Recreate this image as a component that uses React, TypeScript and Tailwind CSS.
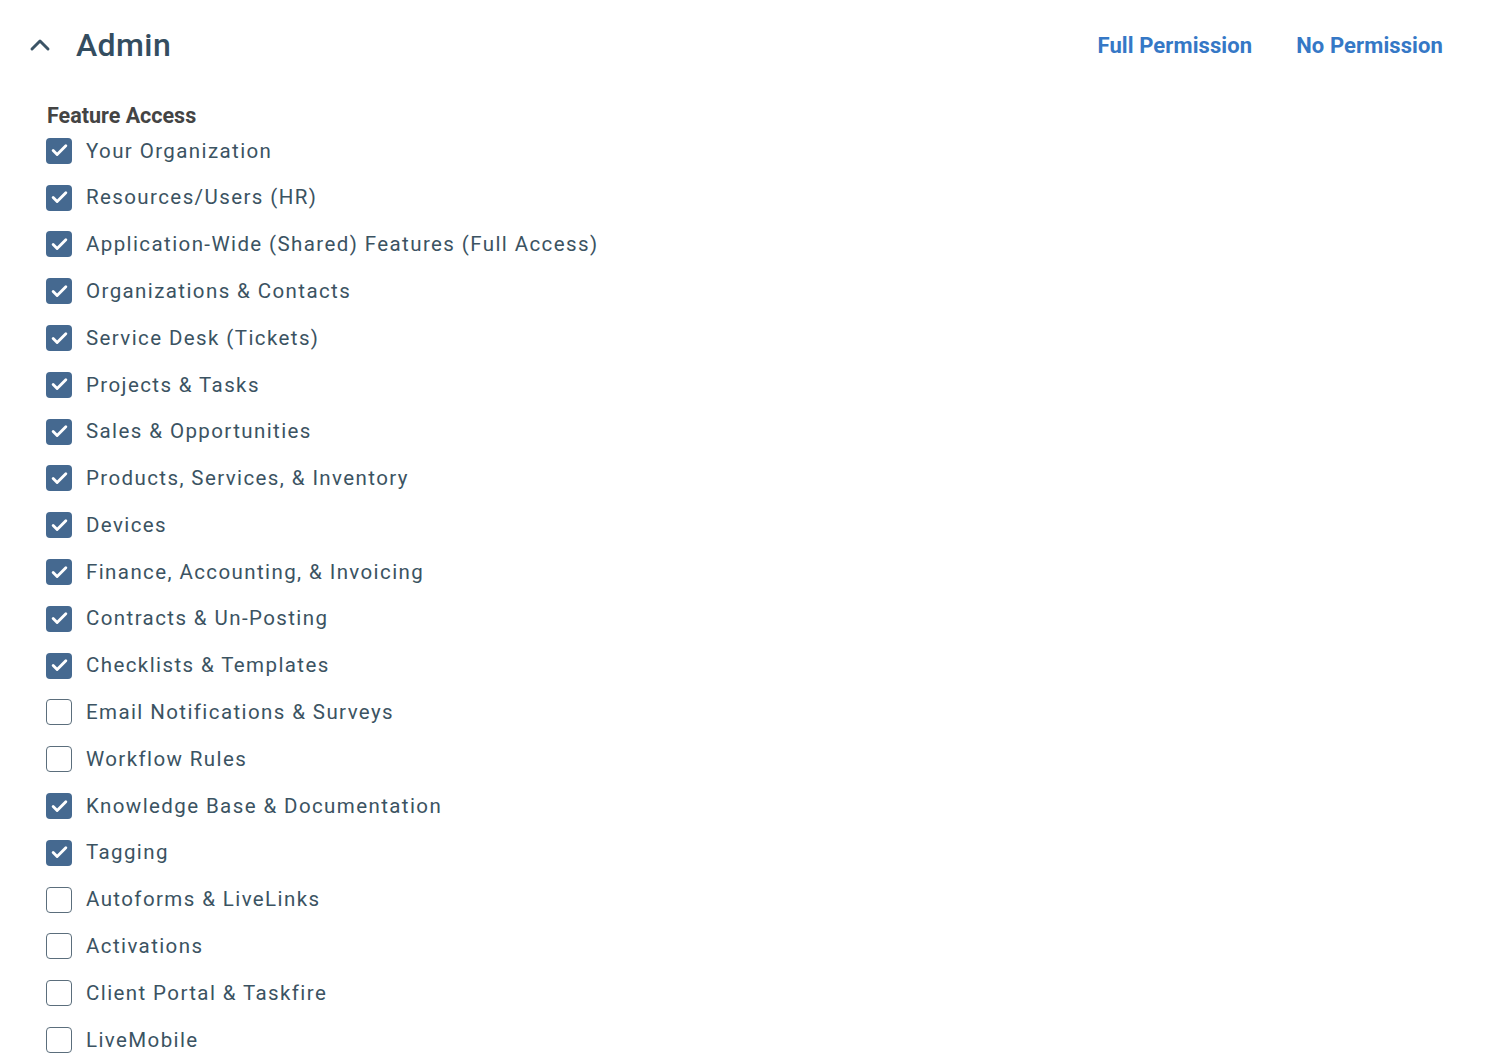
import { ChevronUp, Check } from "lucide-react"

const FEATURES: { label: string; checked: boolean }[] = [
  { label: "Your Organization", checked: true },
  { label: "Resources/Users (HR)", checked: true },
  { label: "Application-Wide (Shared) Features (Full Access)", checked: true },
  { label: "Organizations & Contacts", checked: true },
  { label: "Service Desk (Tickets)", checked: true },
  { label: "Projects & Tasks", checked: true },
  { label: "Sales & Opportunities", checked: true },
  { label: "Products, Services, & Inventory", checked: true },
  { label: "Devices", checked: true },
  { label: "Finance, Accounting, & Invoicing", checked: true },
  { label: "Contracts & Un-Posting", checked: true },
  { label: "Checklists & Templates", checked: true },
  { label: "Email Notifications & Surveys", checked: false },
  { label: "Workflow Rules", checked: false },
  { label: "Knowledge Base & Documentation", checked: true },
  { label: "Tagging", checked: true },
  { label: "Autoforms & LiveLinks", checked: false },
  { label: "Activations", checked: false },
  { label: "Client Portal & Taskfire", checked: false },
  { label: "LiveMobile", checked: false },
]

function Box({ checked }: { checked: boolean }) {
  if (checked) {
    return (
      <span className="w-[26px] h-[26px] shrink-0 rounded-[4px] bg-[#456990] flex items-center justify-center">
        <Check className="w-[19px] h-[19px] text-white" strokeWidth={3.6} />
      </span>
    )
  }
  return <span className="w-[26px] h-[26px] shrink-0 rounded-[4px] border-[1.5px] border-[#5b6e7c] bg-white" />
}

export default function App() {
  return (
    <div className="min-h-screen bg-white font-['Roboto','Liberation_Sans',sans-serif]">
      <div className="flex items-center justify-between pl-[24px] pr-[51px] pt-[22px] h-[68px]">
        <div className="flex items-center">
          <ChevronUp className="w-[32px] h-[32px] text-[#3b5466]" strokeWidth={2.2} />
          <h1 className="ml-[20px] text-[32px] font-medium text-[#344d60] leading-none tracking-[0.4px]">Admin</h1>
        </div>
        <div className="flex items-center gap-[44px] text-[22px] font-bold text-[#3578c6] tracking-[0.1px]">
          <button>Full Permission</button>
          <button>No Permission</button>
        </div>
      </div>
      <div className="pl-[47px] pt-[37px]">
        <h2 className="text-[21.5px] font-bold text-[#444] leading-none">Feature Access</h2>
        <ul className="mt-[1px]">
          {FEATURES.map((f) => (
            <li key={f.label} className="flex items-center h-[46.8px] -ml-[1px]">
              <Box checked={f.checked} />
              <span className="ml-[14px] text-[20.5px] tracking-[1.4px] text-[#3b5362]">{f.label}</span>
            </li>
          ))}
        </ul>
      </div>
    </div>
  )
}
